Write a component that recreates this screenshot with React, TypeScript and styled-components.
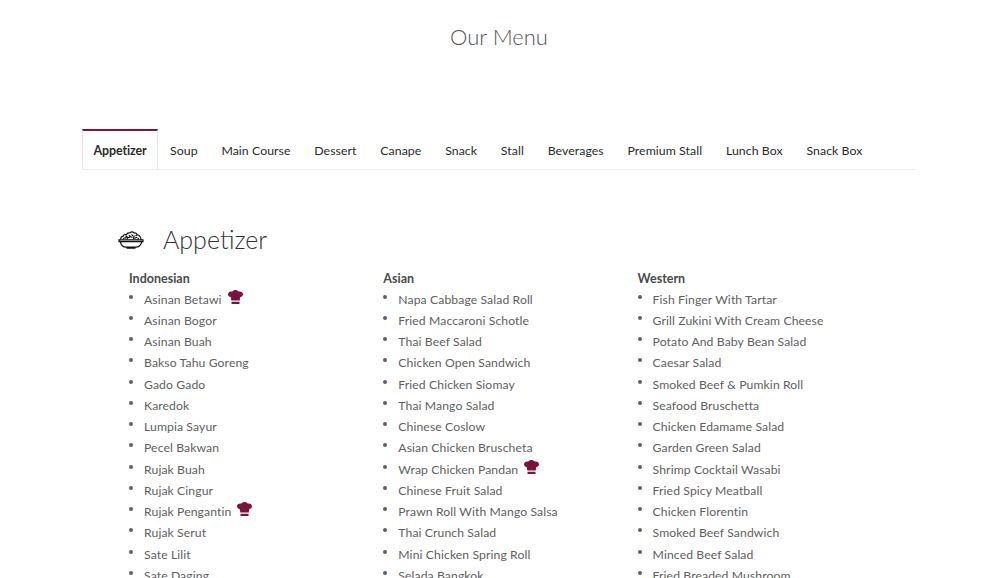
import styled, { createGlobalStyle } from 'styled-components';

const GlobalStyle = createGlobalStyle`
  html, body {
    margin: 0;
    padding: 0;
    height: 578px;
    overflow: hidden;
    background: #fff;
    font-family: Lato, "Open Sans", sans-serif;
  }
`;

const Page = styled.div`
  width: 998px;
  height: 578px;
  overflow: hidden;
`;

const Title = styled.h1`
  margin: 0;
  padding-top: 23px;
  height: 129px;
  box-sizing: border-box;
  text-align: center;
  font-size: 22px;
  line-height: 28px;
  font-weight: 300;
  color: #555;
`;

const Tabs = styled.ul`
  display: flex;
  margin: 0 82px;
  padding: 0;
  list-style: none;
  border-bottom: 1px solid #ececec;
`;

const Tab = styled.li<{ $active?: boolean }>`
  box-sizing: border-box;
  height: 40px;
  padding: 0 ${(p) => (p.$active ? '10.5px' : '10.9px')};
  line-height: 39px;
  font-size: ${(p) => (p.$active ? '12.4px' : '12.3px')};
  letter-spacing: ${(p) => (p.$active ? '-0.08px' : '0.06px')};
  color: #2a2a2a;
  font-weight: ${(p) => (p.$active ? 700 : 400)};
  border-top: 2px solid ${(p) => (p.$active ? '#7b1340' : 'transparent')};
  border-left: 1px solid ${(p) => (p.$active ? '#e4e4e4' : 'transparent')};
  border-right: 1px solid ${(p) => (p.$active ? '#e4e4e4' : 'transparent')};
`;

const Section = styled.section`
  padding: 52px 0 0 118px;
`;

const Heading = styled.div`
  display: flex;
  align-items: center;
  gap: 19px;
  height: 34px;
  font-size: 25px;
  font-weight: 300;
  color: #333;
`;

const Columns = styled.div`
  display: flex;
  margin-top: 13px;
  padding-left: 11px;
`;

const Column = styled.div`
  width: 254.3px;
`;

const ColumnTitle = styled.h4`
  margin: 0;
  font-size: 12.5px;
  line-height: 19.5px;
  font-weight: 700;
  color: #4a4a4a;
`;

const List = styled.ul`
  margin: 0;
  padding: 0;
  list-style: none;
`;

const Item = styled.li`
  display: flex;
  align-items: center;
  height: 21.25px;
  padding-left: 15px;
  position: relative;
  font-size: 12.2px;
  letter-spacing: 0.1px;
  color: #606060;

  &::before {
    content: '';
    position: absolute;
    left: 0;
    top: 6px;
    width: 4px;
    height: 4px;
    border-radius: 50%;
    background: #606060;
  }
`;

const Hat = styled.svg`
  width: 15px;
  height: 14px;
  margin: -5px 0 0 6px;
  color: #7b1340;
`;

const ChefHat = () => (
  <Hat viewBox="0 0 15 14">
    <path
      fill="currentColor"
      d="M3.500 11.800h8V14h-8zM3.300 10.600 2.800 7.300C1.200 7 0 5.800 0 4.300 0 2.600 1.400 1.400 3.200 1.400c.4 0 .8.100 1.100.2C5 .6 6.200 0 7.500 0s2.500.6 3.200 1.600c.3-.1.700-.2 1.100-.2C13.600 1.400 15 2.600 15 4.300c0 1.500-1.200 2.700-2.800 3l-.5 3.300z"
    />
  </Hat>
);

const BowlIcon = () => (
  <svg width="26" height="19" viewBox="0 0 26 19" fill="none" stroke="#111" strokeWidth="1.2">
    <path d="M1 9.800h24v1.800H1zM2.300 11.600c.6 3.400 3 5.600 6 5.600h9.400c3 0 5.400-2.200 6-5.600M8.500 18.200h9" />
    <path
      strokeWidth="1.2"
      d="M2.800 9.500c-.4-1.700.6-3 2.200-3.100C5.400 4.800 7 4.200 8.300 4.800 9 3.100 10.600 2.500 12 3c1.100-1.400 3-1.400 3.900-.1 1.600-.4 3 .6 3.300 2 1.800.1 3.800 2.100 3.900 4.600"
    />
    <path
      strokeWidth="1.1"
      d="M5 9.500c.3-1.300 1.300-1.800 2.400-1.500.5-1 1.500-1.200 2.300-.6M9 9.500c0-1.500 1.200-2.400 2.500-2.100.9-1.400 2.300-.6 2.600.3M15.300 9.500c.1-1.200 1-1.700 2-1.400.4-.8 1.500-.8 2 0M19.800 9.500c0-.7.500-1.200 1.200-1.200M7.500 6c1 .1 1.600.6 2 1.300M10.800 5.200l1.500 1.200M13.500 4.300l1.500 1.900M17.800 6.300l.9-1.700M15 7.600l1.600-2"
    />
  </svg>
);

const tabs = [
  'Appetizer',
  'Soup',
  'Main Course',
  'Dessert',
  'Canape',
  'Snack',
  'Stall',
  'Beverages',
  'Premium Stall',
  'Lunch Box',
  'Snack Box',
];

type MenuItem = { name: string; special?: boolean };

const columns: { title: string; items: MenuItem[] }[] = [
  {
    title: 'Indonesian',
    items: [
      { name: 'Asinan Betawi', special: true },
      { name: 'Asinan Bogor' },
      { name: 'Asinan Buah' },
      { name: 'Bakso Tahu Goreng' },
      { name: 'Gado Gado' },
      { name: 'Karedok' },
      { name: 'Lumpia Sayur' },
      { name: 'Pecel Bakwan' },
      { name: 'Rujak Buah' },
      { name: 'Rujak Cingur' },
      { name: 'Rujak Pengantin', special: true },
      { name: 'Rujak Serut' },
      { name: 'Sate Lilit' },
      { name: 'Sate Daging' },
    ],
  },
  {
    title: 'Asian',
    items: [
      { name: 'Napa Cabbage Salad Roll' },
      { name: 'Fried Maccaroni Schotle' },
      { name: 'Thai Beef Salad' },
      { name: 'Chicken Open Sandwich' },
      { name: 'Fried Chicken Siomay' },
      { name: 'Thai Mango Salad' },
      { name: 'Chinese Coslow' },
      { name: 'Asian Chicken Bruscheta' },
      { name: 'Wrap Chicken Pandan', special: true },
      { name: 'Chinese Fruit Salad' },
      { name: 'Prawn Roll With Mango Salsa' },
      { name: 'Thai Crunch Salad' },
      { name: 'Mini Chicken Spring Roll' },
      { name: 'Selada Bangkok' },
    ],
  },
  {
    title: 'Western',
    items: [
      { name: 'Fish Finger With Tartar' },
      { name: 'Grill Zukini With Cream Cheese' },
      { name: 'Potato And Baby Bean Salad' },
      { name: 'Caesar Salad' },
      { name: 'Smoked Beef & Pumkin Roll' },
      { name: 'Seafood Bruschetta' },
      { name: 'Chicken Edamame Salad' },
      { name: 'Garden Green Salad' },
      { name: 'Shrimp Cocktail Wasabi' },
      { name: 'Fried Spicy Meatball' },
      { name: 'Chicken Florentin' },
      { name: 'Smoked Beef Sandwich' },
      { name: 'Minced Beef Salad' },
      { name: 'Fried Breaded Mushroom' },
    ],
  },
];

export default function App() {
  return (
    <Page>
      <GlobalStyle />
      <Title>Our Menu</Title>
      <Tabs>
        {tabs.map((tab, i) => (
          <Tab key={tab} $active={i === 0}>
            {tab}
          </Tab>
        ))}
      </Tabs>
      <Section>
        <Heading>
          <BowlIcon />
          Appetizer
        </Heading>
        <Columns>
          {columns.map((col) => (
            <Column key={col.title}>
              <ColumnTitle>{col.title}</ColumnTitle>
              <List>
                {col.items.map((item) => (
                  <Item key={item.name}>
                    {item.name}
                    {item.special && <ChefHat />}
                  </Item>
                ))}
              </List>
            </Column>
          ))}
        </Columns>
      </Section>
    </Page>
  );
}
